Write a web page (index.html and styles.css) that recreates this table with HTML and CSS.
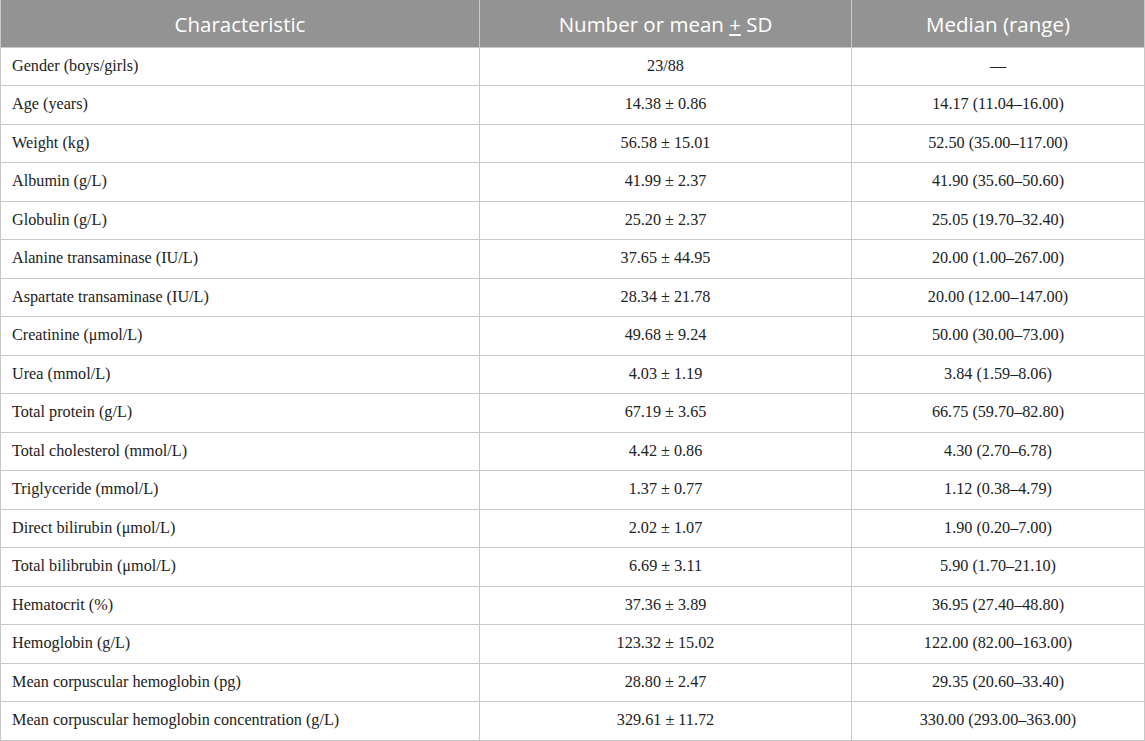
FILE: index.html
```html
<!DOCTYPE html>
<html>
<head>
<meta charset="utf-8">
<link rel="stylesheet" href="styles.css">
</head>
<body>
<table class="data">
  <colgroup><col class="c1"><col class="c2"><col class="c3"></colgroup>
  <thead>
    <tr><th>Characteristic</th><th>Number or mean <span class="pm">+</span> SD</th><th>Median (range)</th></tr>
  </thead>
  <tbody>
    <tr><td>Gender (boys/girls)</td><td>23/88</td><td>—</td></tr>
    <tr><td>Age (years)</td><td>14.38 ± 0.86</td><td>14.17 (11.04–16.00)</td></tr>
    <tr><td>Weight (kg)</td><td>56.58 ± 15.01</td><td>52.50 (35.00–117.00)</td></tr>
    <tr><td>Albumin (g/L)</td><td>41.99 ± 2.37</td><td>41.90 (35.60–50.60)</td></tr>
    <tr><td>Globulin (g/L)</td><td>25.20 ± 2.37</td><td>25.05 (19.70–32.40)</td></tr>
    <tr><td>Alanine transaminase (IU/L)</td><td>37.65 ± 44.95</td><td>20.00 (1.00–267.00)</td></tr>
    <tr><td>Aspartate transaminase (IU/L)</td><td>28.34 ± 21.78</td><td>20.00 (12.00–147.00)</td></tr>
    <tr><td>Creatinine (μmol/L)</td><td>49.68 ± 9.24</td><td>50.00 (30.00–73.00)</td></tr>
    <tr><td>Urea (mmol/L)</td><td>4.03 ± 1.19</td><td>3.84 (1.59–8.06)</td></tr>
    <tr><td>Total protein (g/L)</td><td>67.19 ± 3.65</td><td>66.75 (59.70–82.80)</td></tr>
    <tr><td>Total cholesterol (mmol/L)</td><td>4.42 ± 0.86</td><td>4.30 (2.70–6.78)</td></tr>
    <tr><td>Triglyceride (mmol/L)</td><td>1.37 ± 0.77</td><td>1.12 (0.38–4.79)</td></tr>
    <tr><td>Direct bilirubin (μmol/L)</td><td>2.02 ± 1.07</td><td>1.90 (0.20–7.00)</td></tr>
    <tr><td>Total bilibrubin (μmol/L)</td><td>6.69 ± 3.11</td><td>5.90 (1.70–21.10)</td></tr>
    <tr><td>Hematocrit (%)</td><td>37.36 ± 3.89</td><td>36.95 (27.40–48.80)</td></tr>
    <tr><td>Hemoglobin (g/L)</td><td>123.32 ± 15.02</td><td>122.00 (82.00–163.00)</td></tr>
    <tr><td>Mean corpuscular hemoglobin (pg)</td><td>28.80 ± 2.47</td><td>29.35 (20.60–33.40)</td></tr>
    <tr><td>Mean corpuscular hemoglobin concentration (g/L)</td><td>329.61 ± 11.72</td><td>330.00 (293.00–363.00)</td></tr>
  </tbody>
</table>
</body>
</html>
```

FILE: styles.css
```css
html, body {
  margin: 0;
  padding: 0;
  background: #ffffff;
}
.data {
  width: 1144px;
  border-collapse: collapse;
  table-layout: fixed;
  margin-left: 0;
}
.c1 { width: 479px; }
.c2 { width: 372px; }
.c3 { width: 293px; }
.data th {
  background: #939393;
  color: #ffffff;
  font-family: "Open Sans", "Noto Sans", sans-serif;
  font-weight: 400;
  font-size: 20.5px;
  height: 47px;
  padding: 2px 0 0 0;
  text-align: center;
  border: 1px solid #c8c8c8;
  border-top: none;
  box-sizing: border-box;
}
.pm {
  text-decoration: underline;
  text-underline-offset: 2px;
}
.data td {
  font-family: "Liberation Serif", "Times New Roman", serif;
  font-size: 16.2px;
  color: #222222;
  height: 38.5px;
  padding: 0 11px;
  text-align: center;
  border: 1px solid #c8c8c8;
  box-sizing: border-box;
}
.data td:first-child {
  text-align: left;
}
```
